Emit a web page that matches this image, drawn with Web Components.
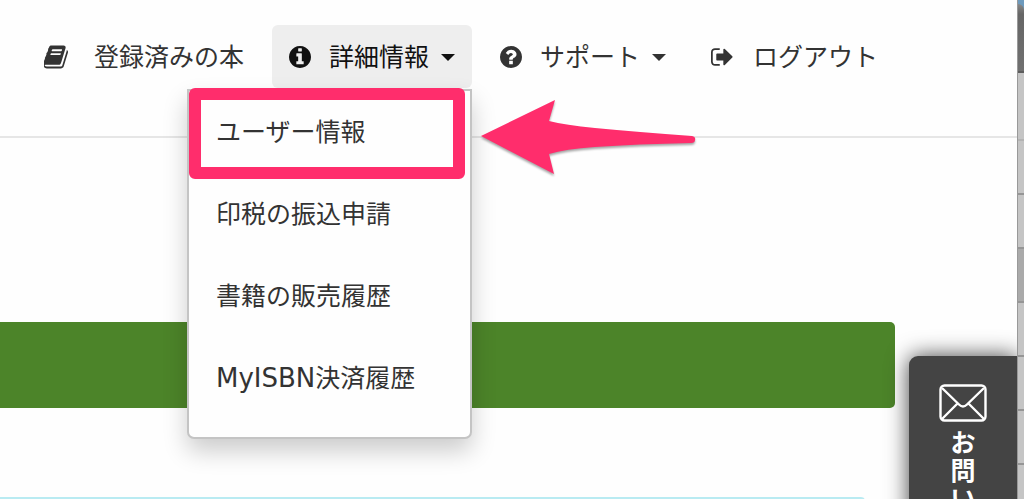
<!DOCTYPE html>
<html lang="ja">
<head>
<meta charset="utf-8">
<title>MyISBN</title>
<style>
html, body { margin: 0; height: 100%; overflow: hidden; }
body { background: #fefefe; color: #333; font: 25px/30px "Noto Sans CJK JP", sans-serif; }
</style>
</head>
<body>
<app-window>
  <site-header slot="header">
    <nav-item><fa-icon slot="icon" name="book"></fa-icon>登録済みの本</nav-item>
    <nav-item menu active>
      <fa-icon slot="icon" name="info"></fa-icon>詳細情報
      <drop-menu slot="menu">
        <menu-entry marked>ユーザー情報</menu-entry>
        <menu-entry>印税の振込申請</menu-entry>
        <menu-entry>書籍の販売履歴</menu-entry>
        <menu-entry latin="MyISBN">決済履歴</menu-entry>
      </drop-menu>
    </nav-item>
    <nav-item menu><fa-icon slot="icon" name="question"></fa-icon>サポート</nav-item>
    <nav-item><fa-icon slot="icon" name="signout"></fa-icon>ログアウト</nav-item>
  </site-header>
  <page-body></page-body>
  <contact-tab slot="tab">お問い</contact-tab>
  <window-edge slot="edge"></window-edge>
</app-window>

<script>
const define = (name, html, setup) => customElements.define(name, class extends HTMLElement {
  constructor() {
    super();
    const t = document.createElement('template');
    t.innerHTML = html;
    this.attachShadow({ mode: 'open' }).append(t.content.cloneNode(true));
  }
  connectedCallback() { if (setup) setup(this, this.shadowRoot); }
});

const disc = 'm640 416q0 209-103 385.5t-279.5 279.5-385.5 103-385.5-103-279.5-279.5-103-385.5 103-385.5 279.5-279.5 385.5-103 385.5 103 279.5 279.5 103 385.5z';
const circle = 'M1664 896q0 209-103 385.5t-279.5 279.5-385.5 103-385.5-103-279.5-279.5-103-385.5 103-385.5 279.5-279.5 385.5-103 385.5 103 279.5 279.5 103 385.5z';
const icons = {
  book: [32, 24, '64 96 2133 1600', 'M1639 478q40 57 18 129l-275 906q-19 64-76.5 107.5t-122.5 43.5h-923q-77 0-148.5-53.5t-99.5-131.5q-24-67-2-127 0-4 3-27t4-37q1-8-3-21.5t-3-19.5q2-11 8-21t16.5-23.5 16.5-23.5q23-38 45-91.5t30-91.5q3-10 .5-30t-.5-28q3-11 17-28t17-23q21-36 42-92t25-90q1-9-2.5-32t.5-28q4-13 22-30.5t22-22.5q19-26 42.5-84.5t27.5-96.5q1-8-3-25.5t-2-26.5q2-8 9-18t18-23 17-21q8-12 16.5-30.5t15-35 16-36 19.5-32 26.5-23.5 36-11.5 47.5 5.5l-1 3q38-9 51-9h761q74 0 114 56t18 130l-274 906q-36 119-71.5 153.5t-128.5 34.5h-869q-27 0-38 15-11 16-1 43 24 70 144 70h923q29 0 56-15.5t35-41.5l300-987q7-22 5-57 38 15 59 43zm-1064 2q-4 13 2 22.5t20 9.5h608q13 0 25.5-9.5t16.5-22.5l21-64q4-13-2-22.5t-20-9.5h-608q-13 0-25.5 9.5t-16.5 22.5zm-83 256q-4 13 2 22.5t20 9.5h608q13 0 25.5-9.5t16.5-22.5l21-64q4-13-2-22.5t-20-9.5h-608q-13 0-25.5 9.5t-16.5 22.5z'],
  info: [22, 22, '128 128 1536 1536', 'M1152 1376v-160q0-14-9-23t-23-9h-96v-512q0-14-9-23t-23-9h-320q-14 0-23 9t-9 23v160q0 14 9 23t23 9h96v320h-96q-14 0-23 9t-9 23v160q0 14 9 23t23 9h448q14 0 23-9t9-23zm-128-896v-160q0-14-9-23t-23-9h-192q-14 0-23 9t-9 23v160q0 14 9 23t23 9h192q14 0 23-9t9-23z' + disc],
  question: [22, 22, '128 128 1536 1536', 'M1024 1376v-192q0-14-9-23t-23-9h-192q-14 0-23 9t-9 23v192q0 14 9 23t23 9h192q14 0 23-9t9-23zm256-672q0-88-55.5-163t-138.5-116-170-41q-243 0-371 213-15 24 8 42l132 100q7 6 19 6 16 0 25-12 53-68 86-92 34-24 86-24 48 0 85.5 26t37.5 59q0 38-20 61t-68 45q-63 28-115.5 86.5t-52.5 125.5v36q0 14 9 23t23 9h192q14 0 23-9t9-23q0-19 21.5-49.5t54.5-49.5q32-18 49-28.5t46-35 44.5-48 28-60.5 12.5-81z' + circle],
  signout: [24, 24, '64 24 1745 1745', 'M704 1440q0 4 1 20t.5 26.5-3 23.5-10 19.5-20.5 6.5h-320q-119 0-203.5-84.5t-84.5-203.5v-704q0-119 84.5-203.5t203.5-84.5h320q13 0 22.5 9.5t9.5 22.5q0 4 1 20t.5 26.5-3 23.5-10 19.5-20.5 6.5h-320q-66 0-113 47t-47 113v704q0 66 47 113t113 47h312l11.5 1 11.5 3 8 5.5 7 9 2 13.5zm928-544q0 26-19 45l-544 544q-19 19-45 19t-45-19-19-45v-288h-448q-26 0-45-19t-19-45v-384q0-26 19-45t45-19h448v-288q0-26 19-45t45-19 45 19l544 544q19 19 19 45z']
};

define('fa-icon', `<style>:host{display:block;flex:none}svg{display:block;fill:currentColor}</style>
<svg aria-hidden="true"><path fill-rule="evenodd"/></svg>`, (el, root) => {
  const [w, h, box, d] = icons[el.getAttribute('name')];
  const svg = root.querySelector('svg');
  svg.setAttribute('width', w);
  svg.setAttribute('height', h);
  svg.setAttribute('viewBox', box);
  root.querySelector('path').setAttribute('d', d);
});

define('app-window', `<style>
:host{display:flex;height:100%;position:relative}
main{flex:1;min-width:0;position:relative;overflow:hidden}
</style>
<main><slot name="header"></slot><slot></slot><slot name="tab"></slot></main><slot name="edge"></slot>`);

define('site-header', `<style>
:host{display:block;position:relative;z-index:2;border-bottom:2px solid #e6e6e6}
nav{display:flex;justify-content:flex-end;gap:11px;padding:25px 122px 48px 0}
</style><nav><slot></slot></nav>`);

define('nav-item', `<style>
:host{display:block;position:relative;flex:none}
button{display:flex;align-items:center;box-sizing:border-box;height:63px;padding:0 17px;border:0;border-radius:6px;background:none;color:inherit;font:inherit;white-space:nowrap}
span{margin-left:18px;padding-bottom:4px}
svg{display:none;margin-left:12px;fill:currentColor}
:host([menu]) svg{display:block}
:host([active]) button{background:#eee;color:#111}
</style>
<button type="button"><slot name="icon"></slot><span><slot></slot></span><svg width="14" height="8" viewBox="0 0 14 8" aria-hidden="true"><path d="M0 1h14L7 8z"/></svg></button>
<slot name="menu"></slot>`);

define('drop-menu', `<style>
:host{display:block;position:absolute;top:64px;right:0;box-sizing:border-box;width:285px;padding-bottom:18px;background:#fefefe;border:2px solid #c4c4c4;border-radius:0 0 7px 7px;box-shadow:0 12px 24px rgba(0,0,0,.2)}
</style><div role="menu"><slot></slot></div>`);

define('menu-entry', `<style>
:host{display:block;position:relative}
a{display:flex;align-items:baseline;box-sizing:border-box;height:82px;padding:24px 27px;color:inherit;text-decoration:none;white-space:nowrap}
.latin{font-family:"DejaVu Sans",sans-serif;font-size:26px}
.latin:empty{display:none}
.frame,.arrow{display:none;position:absolute;pointer-events:none}
:host([marked]) :is(.frame,.arrow){display:block}
.frame{box-sizing:border-box;left:0;top:-3px;width:276px;height:91px;border:12px solid #ff2d6c;border-radius:6px}
.arrow{left:288px;top:6px;filter:drop-shadow(0 2px 1px rgba(0,0,0,.35))}
</style>
<a href="#" role="menuitem"><span class="latin"></span><span><slot></slot></span></a>
<div class="frame"></div>
<svg class="arrow" width="224" height="84" viewBox="0 0 224 84" aria-hidden="true"><path fill="#ff2d6c" d="M4 39L78 3L72 24Q88 28 118 31Q160 35 215 39Q219 40 218 43Q218 46 214 46Q160 47 118 50Q88 52 72 57L77 77Z"/></svg>`,
(el, root) => { root.querySelector('.latin').textContent = el.getAttribute('latin') || ''; });

define('page-body', `<style>
:host{display:block;padding:184px 122px 0 0}
.banner{height:86px;background:#4c8429;border-radius:0 5px 5px 0}
.notice{height:80px;margin:89px 30px 0 0;border-top:2px solid #b9ebf2;background:#fefefe;border-radius:0 4px 0 0}
</style><section class="banner"></section><section class="notice"></section>`);

define('contact-tab', `<style>
:host{display:block;position:absolute;z-index:3;right:0;top:356px;bottom:-90px;width:108px;background:#444;border-radius:9px 0 0 0;box-shadow:0 0 22px rgba(0,0,0,.75)}
a{display:flex;flex-direction:column;align-items:center;padding-top:28px;color:#fff;text-decoration:none;font-weight:700;line-height:28px}
svg{display:block;margin-bottom:5px}
span{width:25px;word-break:break-all}
</style>
<a href="#"><svg width="48" height="38" viewBox="0 0 48 38" fill="none" stroke="#fff" stroke-width="2.4" aria-hidden="true"><rect x="1.5" y="1.5" width="45" height="35" rx="4"/><path d="M3 4L20 20.500Q24 24.500 28 20.500L45 4M3 35L18 20M45 35L30 20"/></svg><span><slot></slot></span></a>`);

define('window-edge', `<style>
:host{display:flex;flex-direction:column;flex:none;width:7px;box-sizing:border-box;border-left:1px solid #999;background:#6d9abd;position:relative;z-index:4}
i{display:block;flex:none;box-sizing:border-box;height:54px;background:#c5c5c5;border-bottom:2px solid #969696}
.title{height:69px;margin-top:4px;background:linear-gradient(#888,#666 15%,#707070);border-radius:0 6px 0 0;border-color:#5d5d5d}
.tall{height:68px;border-color:#b4b4b4}
.dark{background:#aaa}
</style><i class="title"></i><i class="tall"></i><i></i><i></i><i class="dark"></i><i></i><i></i><i></i><i></i>`);
</script>
</body>
</html>
